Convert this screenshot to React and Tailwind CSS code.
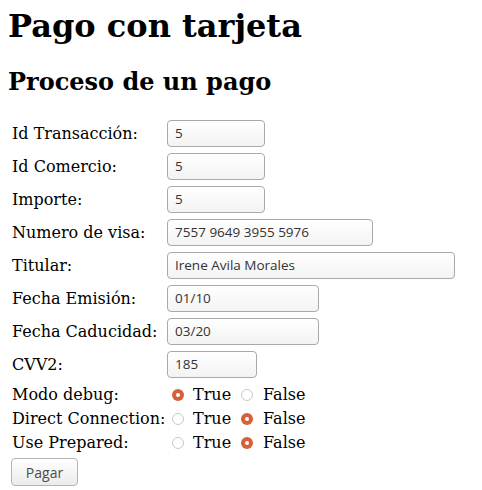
import React from "react";

const serif = "font-['DejaVu_Serif',serif]";
const uiFont = "font-['Open_Sans','Noto_Sans',sans-serif]";

function Field({ label, value, w }) {
  return (
    <div className="flex h-[33px] items-center">
      <div className="w-[155px] shrink-0 text-[16px] text-black">{label}</div>
      <div
        className={`flex h-[27px] items-center rounded-[4px] border border-[#a9a9a9] bg-gradient-to-b from-white to-[#f3f3f3] pl-[7px] text-[13.5px] text-[#333] ${uiFont}`}
        style={{ width: w }}
      >
        {value}
      </div>
    </div>
  );
}

function Radio({ checked }) {
  if (checked) {
    return (
      <span className="flex h-[12px] w-[12px] items-center justify-center rounded-full bg-[#d6603a]">
        <span className="h-[4px] w-[4px] rounded-full bg-white" />
      </span>
    );
  }
  return <span className="block h-[12px] w-[12px] rounded-full border border-[#c8c8c8] bg-white" />;
}

function RadioRow({ label, trueChecked }) {
  return (
    <div className="flex h-[24px] items-center">
      <div className="w-[155px] shrink-0 text-[16px] text-black">{label}</div>
      <div className="flex items-center text-[16px] text-black">
        <span className="ml-[5px] mr-[9px]">
          <Radio checked={trueChecked} />
        </span>
        <span>True</span>
        <span className="ml-[10px] mr-[10px]">
          <Radio checked={!trueChecked} />
        </span>
        <span>False</span>
      </div>
    </div>
  );
}

export default function App() {
  return (
    <div className={`min-h-[490px] bg-white px-[8px] pt-[8px] ${serif}`}>
      <h1 className="text-[32px] font-bold leading-[37px] text-black">Pago con tarjeta</h1>
      <h2 className="mt-[23px] text-[24px] font-bold leading-[28px] text-black">Proceso de un pago</h2>
      <div className="mt-[21px] pl-[4px]">
        <Field label="Id Transacción:" value="5" w={98} />
        <Field label="Id Comercio:" value="5" w={98} />
        <Field label="Importe:" value="5" w={98} />
        <Field label="Numero de visa:" value="7557 9649 3955 5976" w={206} />
        <Field label="Titular:" value="Irene Avila Morales" w={288} />
        <Field label="Fecha Emisión:" value="01/10" w={152} />
        <Field label="Fecha Caducidad:" value="03/20" w={152} />
        <Field label="CVV2:" value="185" w={90} />
        <div className="h-[2px]" />
        <RadioRow label="Modo debug:" trueChecked={true} />
        <RadioRow label="Direct Connection:" trueChecked={false} />
        <RadioRow label="Use Prepared:" trueChecked={false} />
      </div>
      <div className="mt-[3px] pl-[3px]">
        <button
          className={`flex h-[28px] w-[67px] items-center justify-center rounded-[4px] border border-[#b4b4b4] bg-gradient-to-b from-white to-[#ebebeb] text-[14px] text-[#4c4c4c] ${uiFont}`}
        >
          Pagar
        </button>
      </div>
    </div>
  );
}
